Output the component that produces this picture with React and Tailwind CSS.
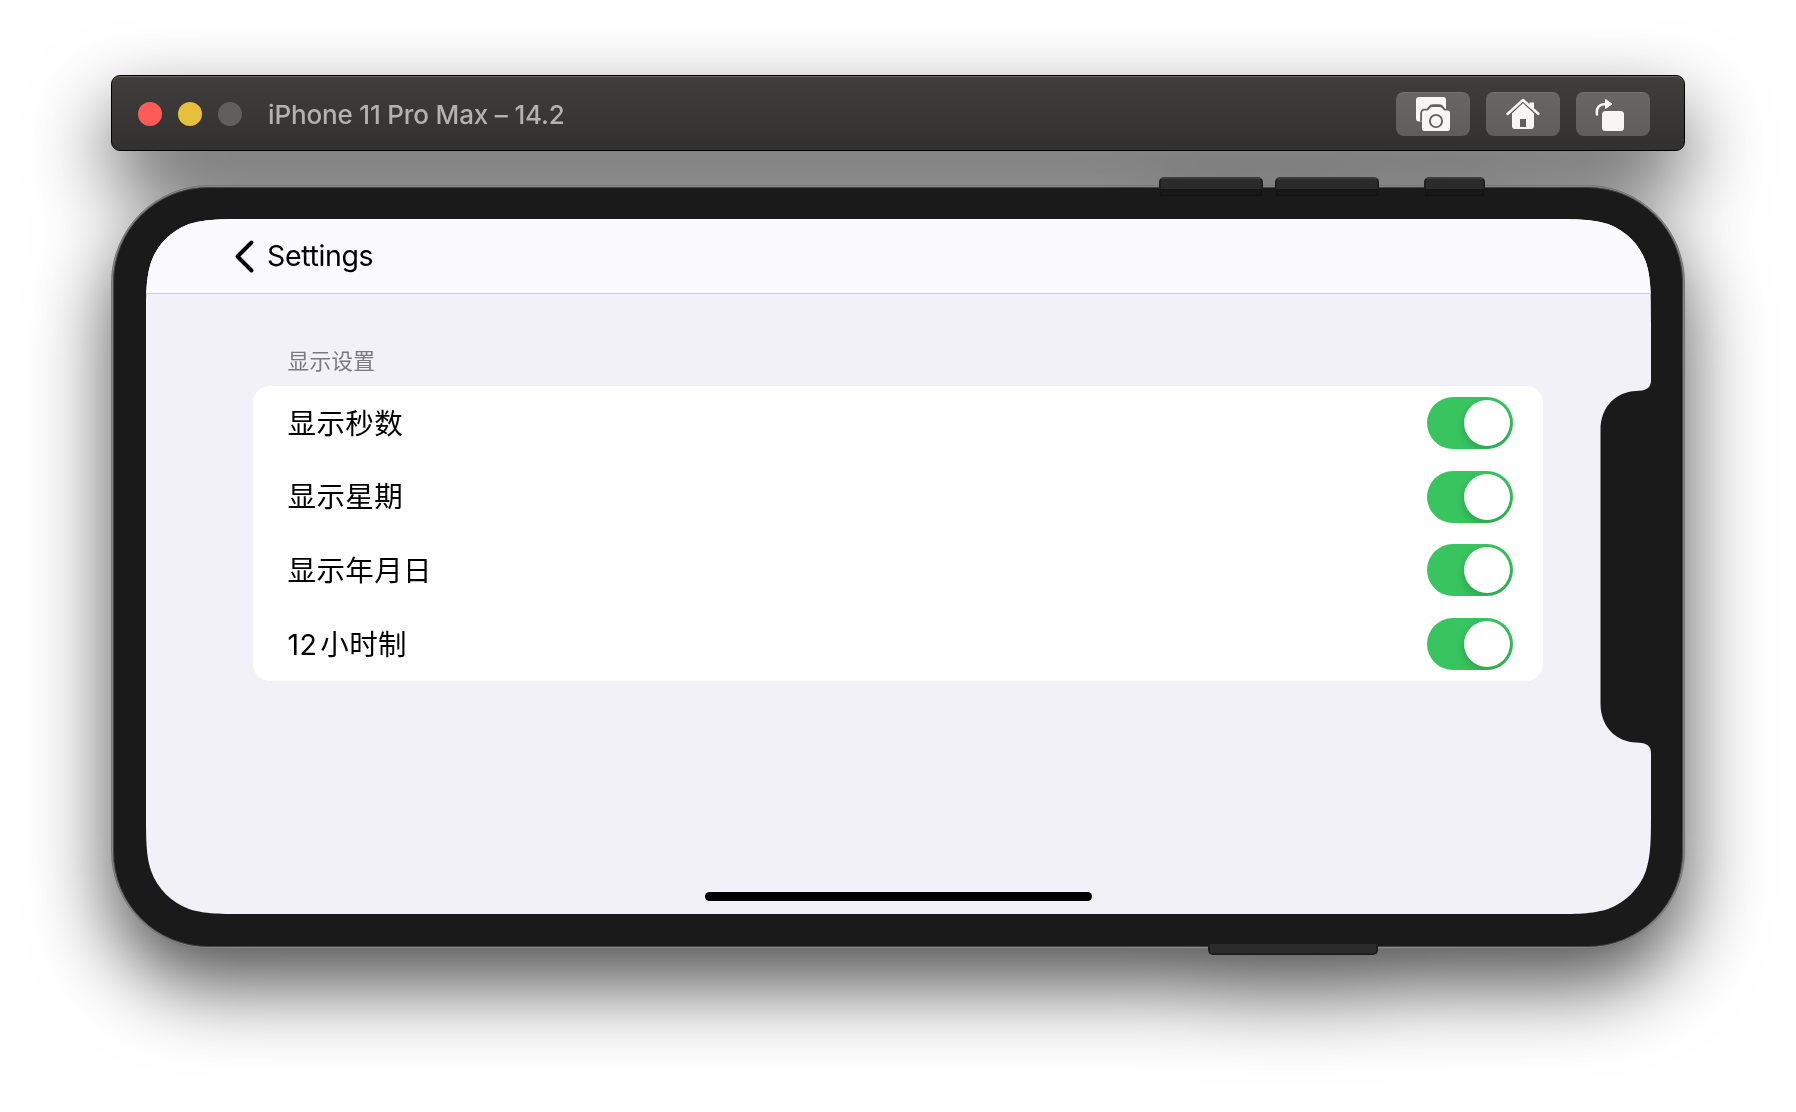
const SANS = "font-['Inter','Noto_Sans_CJK_SC',sans-serif]";

function ToolButton({ children }) {
  return (
    <button className="flex h-11 w-[74px] items-center justify-center rounded-lg border-t border-[#757473] bg-linear-to-b from-[#676665] to-[#5f5e5d]">
      {children}
    </button>
  );
}

function CameraIcon() {
  return (
    <svg className="-mt-px h-9 w-9" viewBox="0 0 36 36">
      <rect x="1" y="1" width="30" height="24.500" rx="3" fill="#f7f6f5" />
      <path
        d="M9.500 14.500h3.300l2.200-3q1-1.500 2.800-1.500h6.400q1.800 0 2.800 1.500l2.200 3h3.300a2.500 2.500 0 0 1 2.500 2.500V32.500a2.500 2.500 0 0 1-2.500 2.500h-23A2.500 2.500 0 0 1 7 32.500V17a2.500 2.500 0 0 1 2.500-2.500z"
        fill="#636261"
        stroke="#636261"
        strokeWidth="3.600"
        strokeLinejoin="round"
        clipPath="url(#camera-area)"
      />
      <clipPath id="camera-area">
        <path d="M0 0h31v25.500H0z" />
      </clipPath>
      <path d="M9.500 14.500h3.300l2.200-2.500q1-1 2.800-1h6.400q1.800 0 2.800 1l2.200 2.500h3.300a2.500 2.500 0 0 1 2.500 2.500V32.500a2.500 2.500 0 0 1-2.500 2.500h-23A2.500 2.500 0 0 1 7 32.500V17a2.500 2.500 0 0 1 2.500-2.500z" fill="#f7f6f5" />
      <circle cx="21" cy="25" r="6.100" fill="#f7f6f5" stroke="#62615f" strokeWidth="1.900" />
    </svg>
  );
}

function HomeIcon() {
  return (
    <svg className="-mt-px h-9 w-9" viewBox="0 0 36 36" fill="#f7f6f5">
      <path d="M2.500 18L18 4L33.500 18" fill="none" stroke="#f7f6f5" strokeWidth="2.500" strokeLinecap="round" strokeLinejoin="round" />
      <path d="M24.500 6.500h4.500v6.500l-4.500-4z" />
      <path fillRule="evenodd" d="M18 7.300L29 17.500V30a3 3 0 0 1-3 3h-16A3 3 0 0 1 7 30V17.500zM15 23v8h6v-8z" />
    </svg>
  );
}

function RotateIcon() {
  return (
    <svg className="-mt-px h-9 w-9" viewBox="0 0 36 36" fill="#f7f6f5">
      <path d="M2 18.500Q.5 8 11.500 8" fill="none" stroke="#f7f6f5" strokeWidth="2.500" strokeLinecap="round" />
      <path d="M10.500 3.500L17 8L10.500 12.500z" stroke="#f7f6f5" strokeWidth="1" strokeLinejoin="round" />
      <rect x="7" y="15" width="22" height="20" rx="3.500" />
    </svg>
  );
}

function TitleBar() {
  return (
    <header className="flex h-[76px] w-[1574px] items-center rounded-[9px] border border-black bg-linear-to-b from-[#3f3e3b] to-[#333130] pt-[2px] pr-[34px] pl-[26px] shadow-[inset_0_1px_0_#6a6966]">
      <div className="flex gap-4">
        <span className="size-6 rounded-full bg-[#ff5c57]" />
        <span className="size-6 rounded-full bg-[#e6c03d]" />
        <span className="size-6 rounded-full bg-[#605e5e]" />
      </div>
      <h1 className="mt-[2px] ml-[26px] text-[26px] leading-none font-[450] tracking-[-0.16px] whitespace-nowrap text-[#b3b2b1]">iPhone 11 Pro Max – 14.2</h1>
      <div className="ml-auto flex gap-4">
        <ToolButton><CameraIcon /></ToolButton>
        <ToolButton><HomeIcon /></ToolButton>
        <ToolButton><RotateIcon /></ToolButton>
      </div>
    </header>
  );
}

function Toggle() {
  return (
    <span className="flex h-[52px] w-[86px] items-center justify-end overflow-hidden rounded-full bg-[#38c55f] p-[3px]">
      <span className="size-[46px] rounded-full bg-white shadow-[0_4px_10px_rgba(0,0,0,0.2)]" />
    </span>
  );
}

function Row({ count, label }) {
  return (
    <label className="flex h-[73.8px] items-center justify-between pr-[30px] pl-[34.500px]">
      <span className="mt-[2px] text-[28.500px] tracking-[0.4px] text-black">
        {count && <span className="mr-[3px]">{count}</span>}
        {label}
      </span>
      <Toggle />
    </label>
  );
}

function Screen() {
  return (
    <main className="flex h-[695px] w-[1505px] flex-col bg-[#f2f1f7] [clip-path:path('M104,0H1401C1431,0,1446,0,1462,5.100C1479.600,11.500,1493.500,25.400,1499.900,43C1505,59,1505,74,1505,104V161C1505,168,1501,171.500,1493,171.700L1490,172C1472,172.500,1454.500,186,1454.500,211V484.500C1454.500,509.500,1472,523,1490,523.500L1493,523.800C1501,524,1505,527.500,1505,534.500V591C1505,621,1505,636,1499.900,652C1493.500,669.600,1479.600,683.500,1462,689.900C1446,695,1431,695,1401,695H104C74,695,59,695,43,689.900C25.400,683.500,11.500,669.600,5.100,652C0,636,0,621,0,591V104C0,74,0,59,5.100,43C11.500,25.400,25.400,11.500,43,5.100C59,0,74,0,104,0Z')]">
      <nav className="flex h-[75px] shrink-0 items-center border-b border-[#d0d0d4] bg-[#fafafd] pl-[87px]">
        <svg className="-mt-px h-9 w-[22px]" viewBox="0 0 22 36" fill="none" stroke="#000" strokeWidth="4" strokeLinecap="round" strokeLinejoin="round">
          <path d="M18.500 4.500L4.500 18.500L18.500 32.500" />
        </svg>
        <span className="ml-[12px] text-[28.500px] tracking-[-0.35px] text-black">Settings</span>
      </nav>
      <h2 className="mt-[51px] ml-[141.500px] h-8 text-[21.700px] leading-8 font-normal tracking-[0.2px] text-[#7a797e]">显示设置</h2>
      <section className="mt-[9px] ml-[107px] w-[1290px] rounded-[17px] bg-white">
        <Row label="显示秒数" />
        <Row label="显示星期" />
        <Row label="显示年月日" />
        <Row count="12" label="小时制" />
      </section>
      <div className="mt-auto mb-[13px] h-[9px] w-[387px] self-center rounded-full bg-black" />
    </main>
  );
}

function SideKey({ className }) {
  return <span className={"absolute border-[#1e1e1e] bg-[#2b2b2b] " + className} />;
}

function Phone() {
  return (
    <div className="relative mt-[34px] h-[764px] w-[1574px] rounded-[98px] border border-[#767676] bg-[#868686] p-px">
      <div className="h-full w-full rounded-[95px] border border-[#444444] bg-[#1a1a1a] px-[32px] pt-[31px]">
        <Screen />
      </div>
      <SideKey className="-top-[9px] left-[1047px] h-3 w-[104px] rounded-t-[5px] border-x-2 border-t-2 border-t-[#3c3c3c]" />
      <SideKey className="-top-[9px] left-[1163px] h-3 w-[104px] rounded-t-[5px] border-x-2 border-t-2 border-t-[#3c3c3c]" />
      <SideKey className="-top-[9px] left-[1312px] h-3 w-[61px] rounded-t-[5px] border-x-2 border-t-2 border-t-[#3c3c3c]" />
      <span className="absolute top-[3px] left-[1048px] h-[7px] w-[102px] border-x border-b border-[#131313] bg-[#171717]" />
      <span className="absolute top-[3px] left-[1164px] h-[7px] w-[102px] border-x border-b border-[#131313] bg-[#171717]" />
      <span className="absolute top-[3px] left-[1313px] h-[7px] w-[59px] border-x border-b border-[#131313] bg-[#171717]" />
      <SideKey className="-bottom-[7px] left-[1096px] h-[11px] w-[170px] rounded-b-[5px] border-x-2 border-b-2" />
    </div>
  );
}

export default function App() {
  return (
    <div className={"h-[1112px] w-[1796px] overflow-hidden bg-white pt-[75px] pl-[111px] antialiased " + SANS}>
      <div className="w-[1574px] [filter:drop-shadow(0_36px_40px_rgba(0,0,0,0.68))]">
        <TitleBar />
        <Phone />
      </div>
    </div>
  );
}
